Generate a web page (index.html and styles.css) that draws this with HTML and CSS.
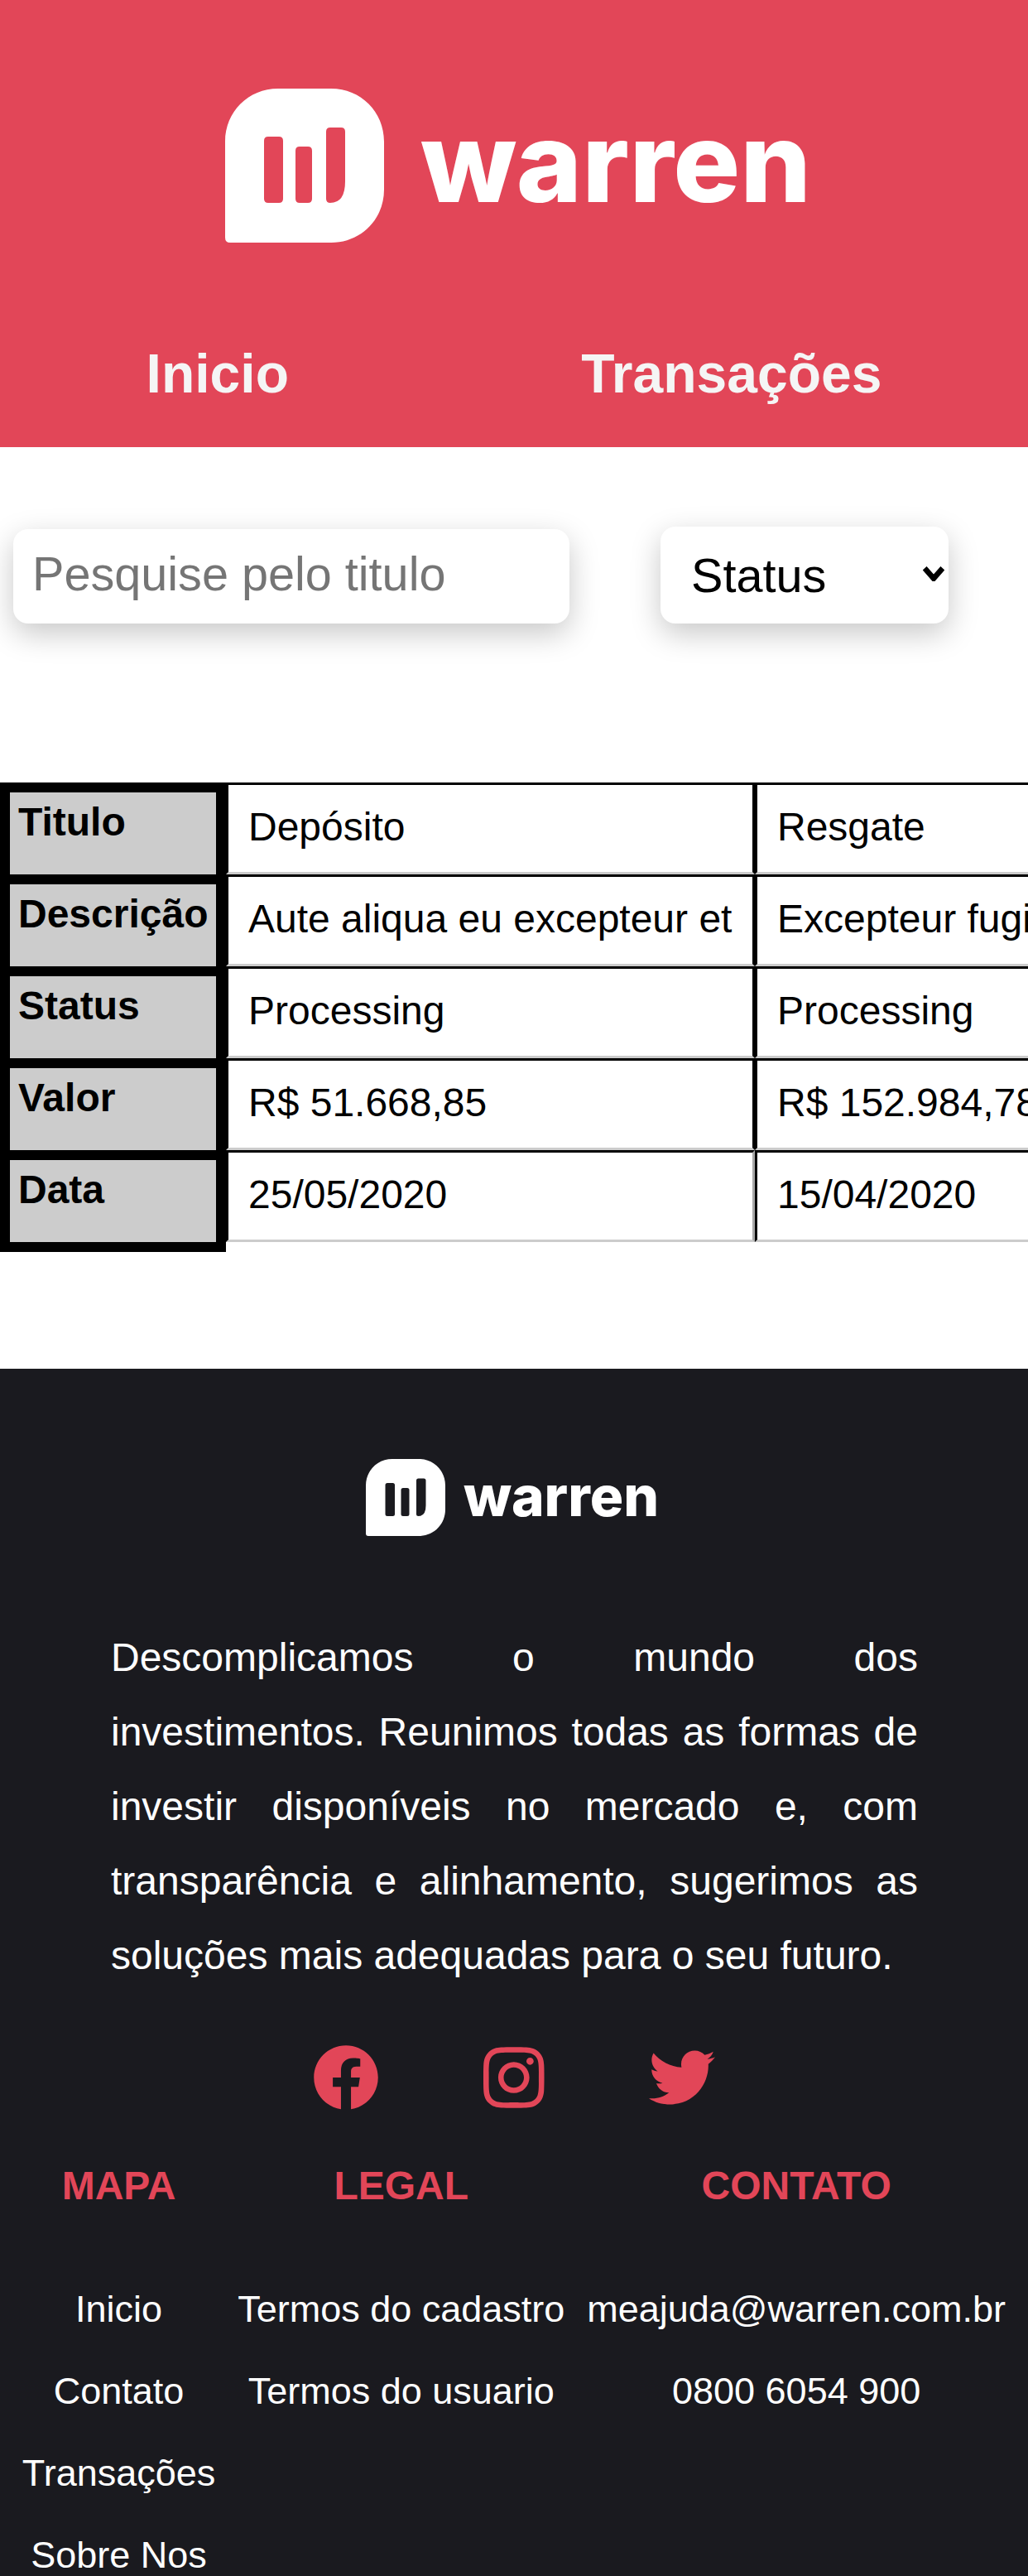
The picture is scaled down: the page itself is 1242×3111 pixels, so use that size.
FILE: index.html
```html
<!DOCTYPE html>
<html lang="pt-BR">
  <head>
    <meta charset="utf-8" />
    <meta name="viewport" content="width=device-width" />
    <title>Warren</title>
    <link rel="stylesheet" href="styles.css">
  </head>

  <body>
    <header class="header">
      <svg class="logo logo-large" viewBox="0 0 720 186" role="img" aria-label="Warren">
        <path class="logo-mark" fill-rule="evenodd" d="M0 64C0 28 28 0 64 0H128C164 0 192 28 192 64V122C192 158 164 186 128 186H6Q0 186 0 180ZM52 58Q47 58 47 63V133Q47 138 52 138H65Q70 138 70 133V63Q70 58 65 58ZM90 70Q85 70 85 75V133Q85 138 90 138H100Q105 138 105 133V75Q105 70 100 70ZM127 47Q122 47 122 52V133Q122 138 127 138Q145 138 145 112V52Q145 47 140 47Z" />
        <text class="logo-word" x="236" y="137" textLength="472" lengthAdjust="spacingAndGlyphs">warren</text>
      </svg>
      <nav class="nav">
        <a class="nav-link" href="#">Inicio</a>
        <a class="nav-link" href="#">Transações</a>
      </nav>
    </header>

    <main>
      <section class="filters">
        <input class="search" type="text" placeholder="Pesquise pelo titulo" />
        <div class="select-box">
          <select class="select">
            <option>Status</option>
            <option>Processing</option>
            <option>Created</option>
            <option>Concluded</option>
          </select>
          <svg class="select-arrow" viewBox="0 0 24 16" preserveAspectRatio="none"><path d="M2 2L12 13L22 2" /></svg>
        </div>
      </section>

      <div class="table-wrap">
        <table class="table">
          <tr>
            <th scope="row">Titulo</th>
            <td>Depósito</td>
            <td>Resgate</td>
          </tr>
          <tr>
            <th scope="row">Descrição</th>
            <td>Aute aliqua eu excepteur et</td>
            <td>Excepteur fugiat nisi dolor</td>
          </tr>
          <tr>
            <th scope="row">Status</th>
            <td>Processing</td>
            <td>Processing</td>
          </tr>
          <tr>
            <th scope="row">Valor</th>
            <td>R$ 51.668,85</td>
            <td>R$ 152.984,78</td>
          </tr>
          <tr class="last-row">
            <th scope="row">Data</th>
            <td>25/05/2020</td>
            <td>15/04/2020</td>
          </tr>
        </table>
      </div>
    </main>

    <footer class="footer">
      <svg class="logo logo-small" viewBox="0 0 720 186" role="img" aria-label="Warren">
        <path class="logo-mark" fill-rule="evenodd" d="M0 64C0 28 28 0 64 0H128C164 0 192 28 192 64V122C192 158 164 186 128 186H6Q0 186 0 180ZM52 58Q47 58 47 63V133Q47 138 52 138H65Q70 138 70 133V63Q70 58 65 58ZM90 70Q85 70 85 75V133Q85 138 90 138H100Q105 138 105 133V75Q105 70 100 70ZM127 47Q122 47 122 52V133Q122 138 127 138Q145 138 145 112V52Q145 47 140 47Z" />
        <text class="logo-word" x="236" y="137" textLength="472" lengthAdjust="spacingAndGlyphs">warren</text>
      </svg>

      <p class="about">
        Descomplicamos o mundo dos investimentos. Reunimos todas as formas de
        investir disponíveis no mercado e, com transparência e alinhamento,
        sugerimos as soluções mais adequadas para o seu futuro.
      </p>

      <div class="social">
        <svg class="social-icon" viewBox="0 0 512 512"><path d="M504 256C504 119 393 8 256 8S8 119 8 256c0 123.78 90.69 226.38 209.25 245V327.69h-63V256h63v-54.64c0-62.15 37-96.48 93.67-96.48 27.14 0 55.52 4.84 55.52 4.84v61h-31.28c-30.8 0-40.41 19.12-40.41 38.73V256h68.78l-11 71.69h-57.78V501C413.31 482.38 504 379.78 504 256z" /></svg>
        <svg class="social-icon social-icon-tall" viewBox="0 0 448 512"><path d="M224.1 141c-63.6 0-114.9 51.3-114.9 114.9s51.3 114.9 114.9 114.9S339 319.5 339 255.9 287.7 141 224.1 141zm0 189.6c-41.1 0-74.7-33.5-74.7-74.7s33.5-74.7 74.7-74.7 74.7 33.5 74.7 74.7-33.6 74.7-74.7 74.7zm146.4-194.3c0 14.9-12 26.8-26.8 26.8-14.9 0-26.8-12-26.8-26.8s12-26.8 26.8-26.8 26.8 12 26.8 26.8zm76.1 27.2c-1.7-35.9-9.9-67.7-36.2-93.9-26.2-26.2-58-34.4-93.9-36.2-37-2.1-147.9-2.1-184.9 0-35.8 1.7-67.6 9.9-93.9 36.1s-34.4 58-36.2 93.9c-2.1 37-2.1 147.9 0 184.9 1.7 35.9 9.9 67.7 36.2 93.9s58 34.4 93.9 36.2c37 2.1 147.9 2.1 184.9 0 35.9-1.7 67.7-9.9 93.9-36.2 26.2-26.2 34.4-58 36.2-93.9 2.1-37 2.1-147.8 0-184.8zM398.8 388c-7.8 19.6-22.9 34.7-42.6 42.6-29.5 11.7-99.5 9-132.1 9s-102.7 2.6-132.1-9c-19.6-7.8-34.7-22.9-42.6-42.6-11.7-29.5-9-99.5-9-132.1s-2.6-102.7 9-132.1c7.8-19.6 22.9-34.7 42.6-42.6 29.5-11.7 99.5-9 132.1-9s102.7-2.6 132.1 9c19.6 7.8 34.7 22.9 42.6 42.6 11.7 29.5 9 99.5 9 132.1s2.7 102.7-9 132.1z" /></svg>
        <svg class="social-icon" viewBox="0 0 512 512"><path d="M459.37 151.716c.325 4.548.325 9.097.325 13.645 0 138.72-105.583 298.558-298.558 298.558-59.452 0-114.68-17.219-161.137-47.106 8.447.974 16.568 1.299 25.34 1.299 49.055 0 94.213-16.568 130.274-44.832-46.132-.975-84.792-31.188-98.112-72.772 6.498.974 12.995 1.624 19.818 1.624 9.421 0 18.843-1.3 27.614-3.573-48.081-9.747-84.143-51.98-84.143-102.985v-1.299c13.969 7.797 30.214 12.67 47.431 13.319-28.264-18.843-46.781-51.005-46.781-87.391 0-19.492 5.197-37.36 14.294-52.954 51.655 63.675 129.3 105.258 216.365 109.807-1.624-7.797-2.599-15.918-2.599-24.04 0-57.828 46.782-104.934 104.934-104.934 30.213 0 57.502 12.67 76.67 33.137 23.715-4.548 46.456-13.32 66.599-25.34-7.798 24.366-24.366 44.833-46.132 57.827 21.117-2.273 41.584-8.122 60.426-16.243-14.292 20.791-32.161 39.308-52.628 54.253z" /></svg>
      </div>

      <div class="columns">
        <div class="column">
          <h3 class="column-title">MAPA</h3>
          <ul class="column-list">
            <li>Inicio</li>
            <li>Contato</li>
            <li>Transações</li>
            <li>Sobre Nos</li>
          </ul>
        </div>
        <div class="column">
          <h3 class="column-title">LEGAL</h3>
          <ul class="column-list">
            <li>Termos do cadastro</li>
            <li>Termos do usuario</li>
          </ul>
        </div>
        <div class="column">
          <h3 class="column-title">CONTATO</h3>
          <ul class="column-list">
            <li>meajuda@warren.com.br</li>
            <li>0800 6054 900</li>
          </ul>
        </div>
      </div>
    </footer>
  </body>
</html>
```

FILE: styles.css
```css
html,
body {
  height: 3111px;
  overflow: hidden;
}

body {
  margin: 0;
  background: #fff;
  color: #000;
  font-family: "Liberation Sans", Arial, sans-serif;
  font-size: 48px;
}

.logo {
  display: block;
  fill: #fff;
}

.logo-large {
  width: 720px;
  height: 186px;
}

.logo-small {
  width: 360px;
  height: 93px;
  margin-left: 442px;
}

.logo-word {
  font-family: Inter, sans-serif;
  font-weight: 800;
  font-size: 134px;
}

/* Header */

.header {
  height: 540px;
  box-sizing: border-box;
  padding-top: 107px;
  background: #e24658;
}

.header .logo {
  margin-left: 272px;
}

.nav {
  display: flex;
  justify-content: space-around;
  margin-top: 120px;
}

.nav-link {
  color: #f5f5f5;
  font-size: 66px;
  font-weight: 700;
  text-decoration: none;
}

/* Filters */

.filters {
  display: flex;
  align-items: flex-end;
  gap: 110px;
  padding: 96px 0 0 16px;
}

.search {
  width: 672px;
  height: 114px;
  box-sizing: border-box;
  padding: 0 23px 6px;
  border: 0;
  border-radius: 18px;
  box-shadow: 0 12px 36px rgba(0, 0, 0, 0.22);
  font-family: inherit;
  font-size: 57.6px;
}

.search::placeholder {
  color: #757575;
}

.select-box {
  position: relative;
  width: 348px;
  height: 117px;
}

.select {
  appearance: none;
  width: 100%;
  height: 100%;
  padding: 0 0 0 37px;
  border: 0;
  border-radius: 18px;
  background: #fff;
  box-shadow: 0 12px 36px rgba(0, 0, 0, 0.22);
  color: #000;
  font-family: inherit;
  font-size: 57.6px;
}

.select-arrow {
  position: absolute;
  top: 48px;
  right: 5px;
  width: 26px;
  height: 18px;
  fill: none;
  stroke: #000;
  stroke-width: 6;
  pointer-events: none;
}

/* Table */

.table-wrap {
  margin-top: 192px;
  padding-bottom: 12px;
  overflow: hidden;
}

.table {
  width: 1551px;
  table-layout: fixed;
  border-collapse: separate;
  border-spacing: 0;
}

.table th {
  width: 273px;
  height: 111px;
  box-sizing: border-box;
  padding: 8px 0 0 10px;
  border: 12px solid #000;
  border-bottom: 0;
  background: #ccc;
  font-weight: 700;
  text-align: left;
  vertical-align: top;
}

.table td {
  height: 111px;
  box-sizing: border-box;
  padding: 0 24px 4px;
  border-style: solid;
  border-width: 3px;
  border-color: #000 #000 #ccc;
  white-space: nowrap;
  overflow: hidden;
}

.last-row th {
  box-shadow: 0 12px 0 #000;
}

.last-row th + td {
  border-right-color: #a8a8a8;
}

/* Footer */

.footer {
  margin-top: 141px;
  padding-top: 109px;
  background: #1a1a1f;
  color: #fff;
}

.about {
  margin: 102px 133px 0 134px;
  line-height: 90px;
  text-align: justify;
}

.social {
  display: flex;
  justify-content: center;
  align-items: center;
  gap: 126px;
  margin-top: 60px;
}

.social-icon {
  height: 80px;
  fill: #e24658;
}

.social-icon-tall {
  height: 84px;
}

.columns {
  display: flex;
  justify-content: space-evenly;
  margin-top: 61px;
  text-align: center;
}

.column-title {
  margin: 0;
  color: #e24658;
  font-size: 48px;
  font-weight: 700;
}

.column-list {
  margin: 96px 0 0;
  padding: 0;
  font-size: 45px;
  list-style: none;
}

.column-list li {
  margin-bottom: 47px;
}
```
